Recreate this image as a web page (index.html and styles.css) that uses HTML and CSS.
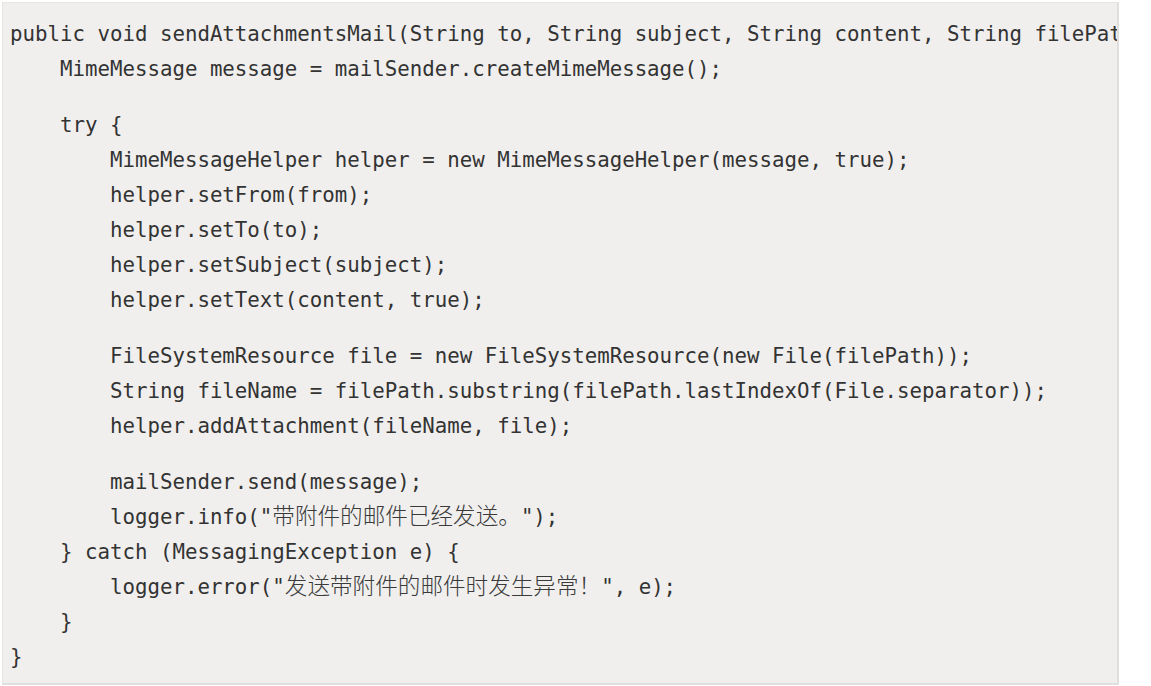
FILE: index.html
```html
<!DOCTYPE html>
<html lang="zh">
<head>
<meta charset="utf-8">
<title>Code</title>
<link rel="stylesheet" href="styles.css">
</head>
<body>
<div class="code">
<div class="line">public void sendAttachmentsMail(String to, String subject, String content, String filePath) {</div>
<div class="line">    MimeMessage message = mailSender.createMimeMessage();</div>
<div class="blank"></div>
<div class="line">    try {</div>
<div class="line">        MimeMessageHelper helper = new MimeMessageHelper(message, true);</div>
<div class="line">        helper.setFrom(from);</div>
<div class="line">        helper.setTo(to);</div>
<div class="line">        helper.setSubject(subject);</div>
<div class="line">        helper.setText(content, true);</div>
<div class="blank"></div>
<div class="line">        FileSystemResource file = new FileSystemResource(new File(filePath));</div>
<div class="line">        String fileName = filePath.substring(filePath.lastIndexOf(File.separator));</div>
<div class="line">        helper.addAttachment(fileName, file);</div>
<div class="blank"></div>
<div class="line">        mailSender.send(message);</div>
<div class="line">        logger.info("<span class="cjk">带附件的邮件已经发送。</span>");</div>
<div class="line">    } catch (MessagingException e) {</div>
<div class="line">        logger.error("<span class="cjk">发送带附件的邮件时发生异常！</span>", e);</div>
<div class="line">    }</div>
<div class="line">}</div>
</div>
</body>
</html>
```

FILE: styles.css
```css
html, body {
  margin: 0;
  padding: 0;
  background: #ffffff;
}

.code {
  margin: 2px 0 0 2px;
  width: 1117px;
  height: 683px;
  box-sizing: border-box;
  background: #f0efee;
  border: 1px solid #e6e5e3;
  border-right: 2px solid #e0dfdd;
  border-bottom: 2px solid #e0dfdd;
  padding: 14px 0 0 7px;
  overflow: hidden;
  color: #333333;
  font-family: "DejaVu Sans Mono", "Liberation Mono", "Noto Sans CJK SC", monospace;
  font-size: 20.75px;
}

.line {
  white-space: pre;
  height: 35px;
  line-height: 35px;
}

.blank {
  height: 21px;
}

.cjk {
  font-family: "Noto Sans CJK SC", sans-serif;
  font-size: 22.6px;
  font-weight: 300;
  line-height: 1;
  color: #3a3a3a;
}
```
